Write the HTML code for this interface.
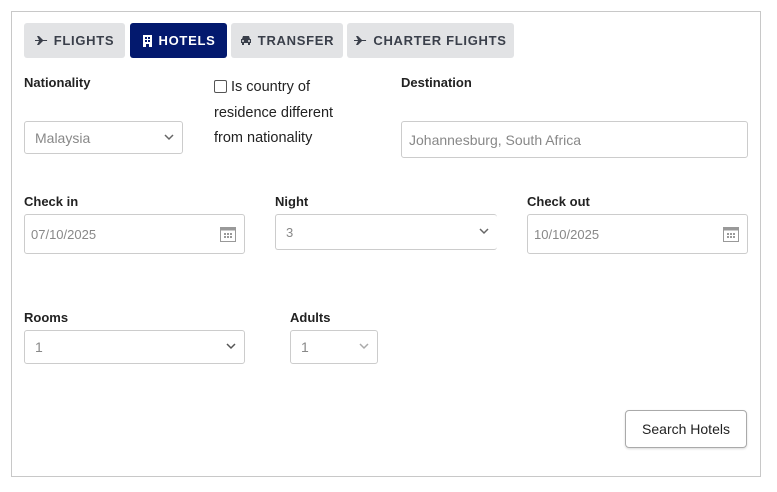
<!DOCTYPE html>
<html><head><style>
body{margin:0;width:777px;height:492px;background:#fff;font-family:"Liberation Sans",sans-serif;position:relative;overflow:hidden}
.a{position:absolute}
.box{left:11px;top:11px;width:748px;height:464px;border:1px solid #c8c8c8}
.tab{top:23px;height:35px;background:#e2e3e5;border-radius:3px;font-size:13px;font-weight:bold;letter-spacing:.7px;color:#3a3f4a;display:flex;align-items:center;justify-content:center;gap:6px}
.tab.on{background:#03196e;color:#fff}
.lbl{font-size:13px;font-weight:bold;color:#222}
.in{border:1px solid #ccc;border-radius:3px;box-sizing:border-box;font-size:14px;color:#888;display:flex;align-items:center;padding-left:10px}
.chev{position:absolute;right:8px;top:50%;margin-top:-4px}
.cal{position:absolute;right:8px;top:50%;margin-top:-9px}
</style></head><body>
<div class="a box"></div>
<div class="a tab" style="left:24px;width:101px"><svg width="13" height="11" viewBox="0 0 13 11"><path d="M0 5h4L2 1h2l4 4h4a1 1 0 010 1H8l-4 4H2l2-4H0z" fill="#3a3f4a"/></svg>FLIGHTS</div>
<div class="a tab on" style="left:130px;width:97px"><svg width="11" height="12" viewBox="0 0 11 12"><rect x="1" y="0" width="9" height="12" fill="#fff"/><g fill="#03196e"><rect x="3" y="2" width="2" height="2"/><rect x="6" y="2" width="2" height="2"/><rect x="3" y="5" width="2" height="2"/><rect x="6" y="5" width="2" height="2"/><rect x="4" y="9" width="3" height="3"/></g></svg>HOTELS</div>
<div class="a tab" style="left:231px;width:112px"><svg width="12" height="11" viewBox="0 0 12 11"><path d="M2 4l1-3h6l1 3h1v4h-1v2H8V8H4v2H2V8H1V4z" fill="#3a3f4a"/><circle cx="3" cy="6" r="1" fill="#e2e3e5"/><circle cx="9" cy="6" r="1" fill="#e2e3e5"/></svg>TRANSFER</div>
<div class="a tab" style="left:347px;width:167px"><svg width="13" height="11" viewBox="0 0 13 11"><path d="M0 5h4L2 1h2l4 4h4a1 1 0 010 1H8l-4 4H2l2-4H0z" fill="#3a3f4a"/></svg>CHARTER FLIGHTS</div>

<div class="a lbl" style="left:24px;top:75px">Nationality</div>
<div class="a in" style="left:24px;top:121px;width:159px;height:33px">Malaysia<svg class="chev" width="10" height="7"><path d="M1 1l4 4 4-4" stroke="#666" stroke-width="1.5" fill="none"/></svg></div>
<div class="a" style="left:214px;top:80px;width:13px;height:13px;border:1px solid #555;border-radius:2px;box-sizing:border-box"></div>
<div class="a" style="left:214px;top:75px;font-size:14.5px;line-height:25.5px;color:#222;width:160px"><span style="padding-left:17px">Is country of</span><br>residence different<br>from nationality</div>
<div class="a lbl" style="left:401px;top:75px">Destination</div>
<div class="a in" style="left:401px;top:121px;width:347px;height:37px;padding-left:7px">Johannesburg, South Africa</div>

<div class="a lbl" style="left:24px;top:194px">Check in</div>
<div class="a in" style="left:24px;top:214px;width:221px;height:40px;padding-left:6px;font-size:13px">07/10/2025<svg class="cal" width="16" height="17"><rect x="0.5" y="2.5" width="15" height="14" fill="none" stroke="#999"/><rect x="0.5" y="2.5" width="15" height="3" fill="#999"/><g fill="#999"><rect x="4" y="8" width="2" height="2"/><rect x="7" y="8" width="2" height="2"/><rect x="10" y="8" width="2" height="2"/><rect x="4" y="11" width="2" height="2"/><rect x="7" y="11" width="2" height="2"/><rect x="10" y="11" width="2" height="2"/></g></svg></div>
<div class="a lbl" style="left:275px;top:194px">Night</div>
<div class="a in" style="left:275px;top:214px;width:222px;height:36px;border-right:none;font-size:13px">3<svg class="chev" width="10" height="7"><path d="M1 1l4 4 4-4" stroke="#666" stroke-width="1.5" fill="none"/></svg></div>
<div class="a lbl" style="left:527px;top:194px">Check out</div>
<div class="a in" style="left:527px;top:214px;width:221px;height:40px;padding-left:6px;font-size:13px">10/10/2025<svg class="cal" width="16" height="17"><rect x="0.5" y="2.5" width="15" height="14" fill="none" stroke="#999"/><rect x="0.5" y="2.5" width="15" height="3" fill="#999"/><g fill="#999"><rect x="4" y="8" width="2" height="2"/><rect x="7" y="8" width="2" height="2"/><rect x="10" y="8" width="2" height="2"/><rect x="4" y="11" width="2" height="2"/><rect x="7" y="11" width="2" height="2"/><rect x="10" y="11" width="2" height="2"/></g></svg></div>

<div class="a lbl" style="left:24px;top:310px">Rooms</div>
<div class="a in" style="left:24px;top:330px;width:221px;height:34px">1<svg class="chev" width="10" height="7"><path d="M1 1l4 4 4-4" stroke="#555" stroke-width="1.5" fill="none"/></svg></div>
<div class="a lbl" style="left:290px;top:310px">Adults</div>
<div class="a in" style="left:290px;top:330px;width:88px;height:34px">1<svg class="chev" width="10" height="7"><path d="M1 1l4 4 4-4" stroke="#aaa" stroke-width="1.5" fill="none"/></svg></div>

<div class="a" style="left:625px;top:410px;width:122px;height:38px;border:1px solid #aaa;border-radius:4px;box-sizing:border-box;display:flex;align-items:center;justify-content:center;font-size:14px;color:#222;box-shadow:0 1px 2px rgba(0,0,0,.15)">Search Hotels</div>
</body></html>
